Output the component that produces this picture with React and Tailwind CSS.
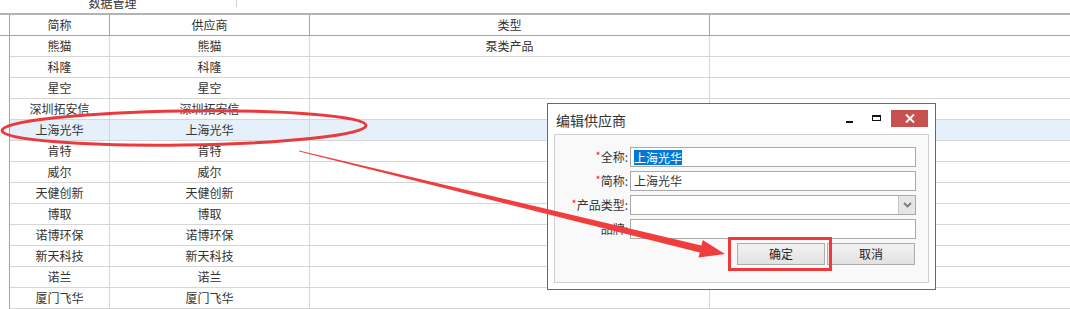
import React from "react";

const rows = [
  ["熊猫", "熊猫", "泵类产品"],
  ["科隆", "科隆", ""],
  ["星空", "星空", ""],
  ["深圳拓安信", "深圳拓安信", ""],
  ["上海光华", "上海光华", ""],
  ["肯特", "肯特", ""],
  ["威尔", "威尔", ""],
  ["天健创新", "天健创新", ""],
  ["博取", "博取", ""],
  ["诺博环保", "诺博环保", ""],
  ["新天科技", "新天科技", ""],
  ["诺兰", "诺兰", ""],
  ["厦门飞华", "厦门飞华", ""],
];

const font = { fontFamily: '"Noto Sans CJK SC", "Noto Sans", sans-serif' };

function Label({ req, text }) {
  return (
    <div className="w-[73px] flex justify-end items-center text-[12px] leading-[20px] text-[#333]">
      {req && <span className="text-[#ff2020] text-[11px] leading-[10px] self-start mt-[3px]">*</span>}
      <span>{text}</span>
      <span className="text-[#2d4b7a]">:</span>
    </div>
  );
}

export default function App() {
  return (
    <div className="relative w-[1070px] h-[309px] overflow-hidden bg-white text-[#333]" style={font}>
      {/* top band */}
      <div className="h-[13px] overflow-hidden flex">
        <div className="w-[225px] text-center text-[12px] leading-[12px] -mt-[3px]">数据管理</div>
        <div className="w-[11px]" />
        <div className="w-[1px] h-[7px] bg-[#cfcfcf]" />
      </div>
      <div className="border-t-2 border-[#b3b3b3]">
        {/* header */}
        <div className="flex h-[21px] border-b border-[#a3a3a3] text-[12px]">
          <div className="w-[10px] border-r border-[#a3a3a3]" />
          <div className="w-[100px] border-r border-[#a3a3a3] flex items-center justify-center">简称</div>
          <div className="w-[200px] border-r border-[#a3a3a3] flex items-center justify-center">供应商</div>
          <div className="w-[400px] border-r border-[#a3a3a3] flex items-center justify-center">类型</div>
          <div className="flex-1" />
        </div>
        {rows.map((r, i) => {
          const sel = i === 4;
          return (
            <div key={i} className="flex h-[21px] text-[12px]">
              <div className="w-[10px] border-r border-[#a3a3a3]" />
              <div className={`flex flex-1 border-b border-[#d6d6d6] ${sel ? "bg-[#e5f0fa]" : ""}`}>
                <div className="w-[100px] border-r border-[#d6d6d6] flex items-center justify-center">{r[0]}</div>
                <div className="w-[200px] border-r border-[#d6d6d6] flex items-center justify-center">{r[1]}</div>
                <div className="w-[400px] border-r border-[#d6d6d6] flex items-center justify-center">{r[2]}</div>
                <div className="flex-1" />
              </div>
            </div>
          );
        })}
      </div>

      {/* dialog */}
      <div className="absolute left-[547px] top-[103px] w-[389px] h-[187px] border border-[#2a78c4] bg-white flex flex-col">
        <div className="h-[30px] flex items-start">
          <div className="text-[14px] leading-[18px] mt-[7px] ml-[8px] text-[#333]">编辑供应商</div>
          <div className="flex-1" />
          <div className="w-[7px] h-[2px] bg-[#111] mt-[17px]" />
          <div className="w-[9px] h-[6px] border border-t-2 border-[#111] mt-[11px] ml-[19px]" />
          <div className="w-[37px] h-[17px] bg-[#c75050] mt-[6px] ml-[10px] mr-[7px] flex items-center justify-center">
            <svg width="10" height="9" viewBox="0 0 10 9">
              <path d="M1 0.5 L9 8.5 M9 0.5 L1 8.5" stroke="#fff" strokeWidth="2" />
            </svg>
          </div>
        </div>
        <div className="ml-[6px] w-[375px] h-[149px] border border-[#d0d0d0] bg-[#f9f9f9] pt-[12px] flex flex-col gap-[4px]">
          <div className="flex items-center gap-[2px] h-[20px]">
            <Label req text="全称" />
            <div className="w-[286px] h-[20px] border border-[#a9a9a9] bg-white pl-[3px] flex items-center">
              <span className="bg-[#0078d7] text-white text-[12px] leading-[15px]">上海光华</span>
            </div>
          </div>
          <div className="flex items-center gap-[2px] h-[20px]">
            <Label req text="简称" />
            <div className="w-[286px] h-[20px] border border-[#a9a9a9] bg-white pl-[3px] flex items-center text-[12px]">上海光华</div>
          </div>
          <div className="flex items-center gap-[2px] h-[20px]">
            <Label req text="产品类型" />
            <div className="w-[286px] h-[20px] border border-[#a9a9a9] bg-white flex justify-end">
              <div className="w-[17px] h-full bg-[#e6e6e6] border-l border-[#c4c4c4] flex items-center justify-center">
                <svg width="9" height="6" viewBox="0 0 9 6">
                  <path d="M1 1 L4.5 4.5 L8 1" stroke="#7a7a7a" strokeWidth="1.8" fill="none" />
                </svg>
              </div>
            </div>
          </div>
          <div className="flex items-center gap-[2px] h-[20px]">
            <Label text="品牌" />
            <div className="w-[286px] h-[20px] border border-[#a9a9a9] bg-white" />
          </div>
          <div className="flex justify-end gap-[2px] pr-[13px]">
            <button className="w-[88px] h-[22px] border border-[#acacac] bg-gradient-to-b from-[#f2f2f2] to-[#e2e2e2] text-[12px] text-[#222]">确定</button>
            <button className="w-[88px] h-[22px] border border-[#acacac] bg-gradient-to-b from-[#f2f2f2] to-[#e2e2e2] text-[12px] text-[#222]">取消</button>
          </div>
        </div>
      </div>

      {/* annotations */}
      <svg className="absolute inset-0 pointer-events-none" width="1070" height="309" viewBox="0 0 1070 309">
        <ellipse cx="184" cy="128" rx="182" ry="17" fill="none" stroke="#ea3a3e" strokeWidth="3" transform="rotate(-0.8 184 128)" />
        <polygon
          points="299,150.6 299.2,151.6 699.8,252.4 698.5,257.6 725,254 702.7,240.1 701.4,245.4"
          fill="#f03e3e"
        />
      </svg>
      <div className="absolute left-[728px] top-[237px] w-[104px] h-[34px] border-[3px] border-[#f03a3a]" />
    </div>
  );
}
